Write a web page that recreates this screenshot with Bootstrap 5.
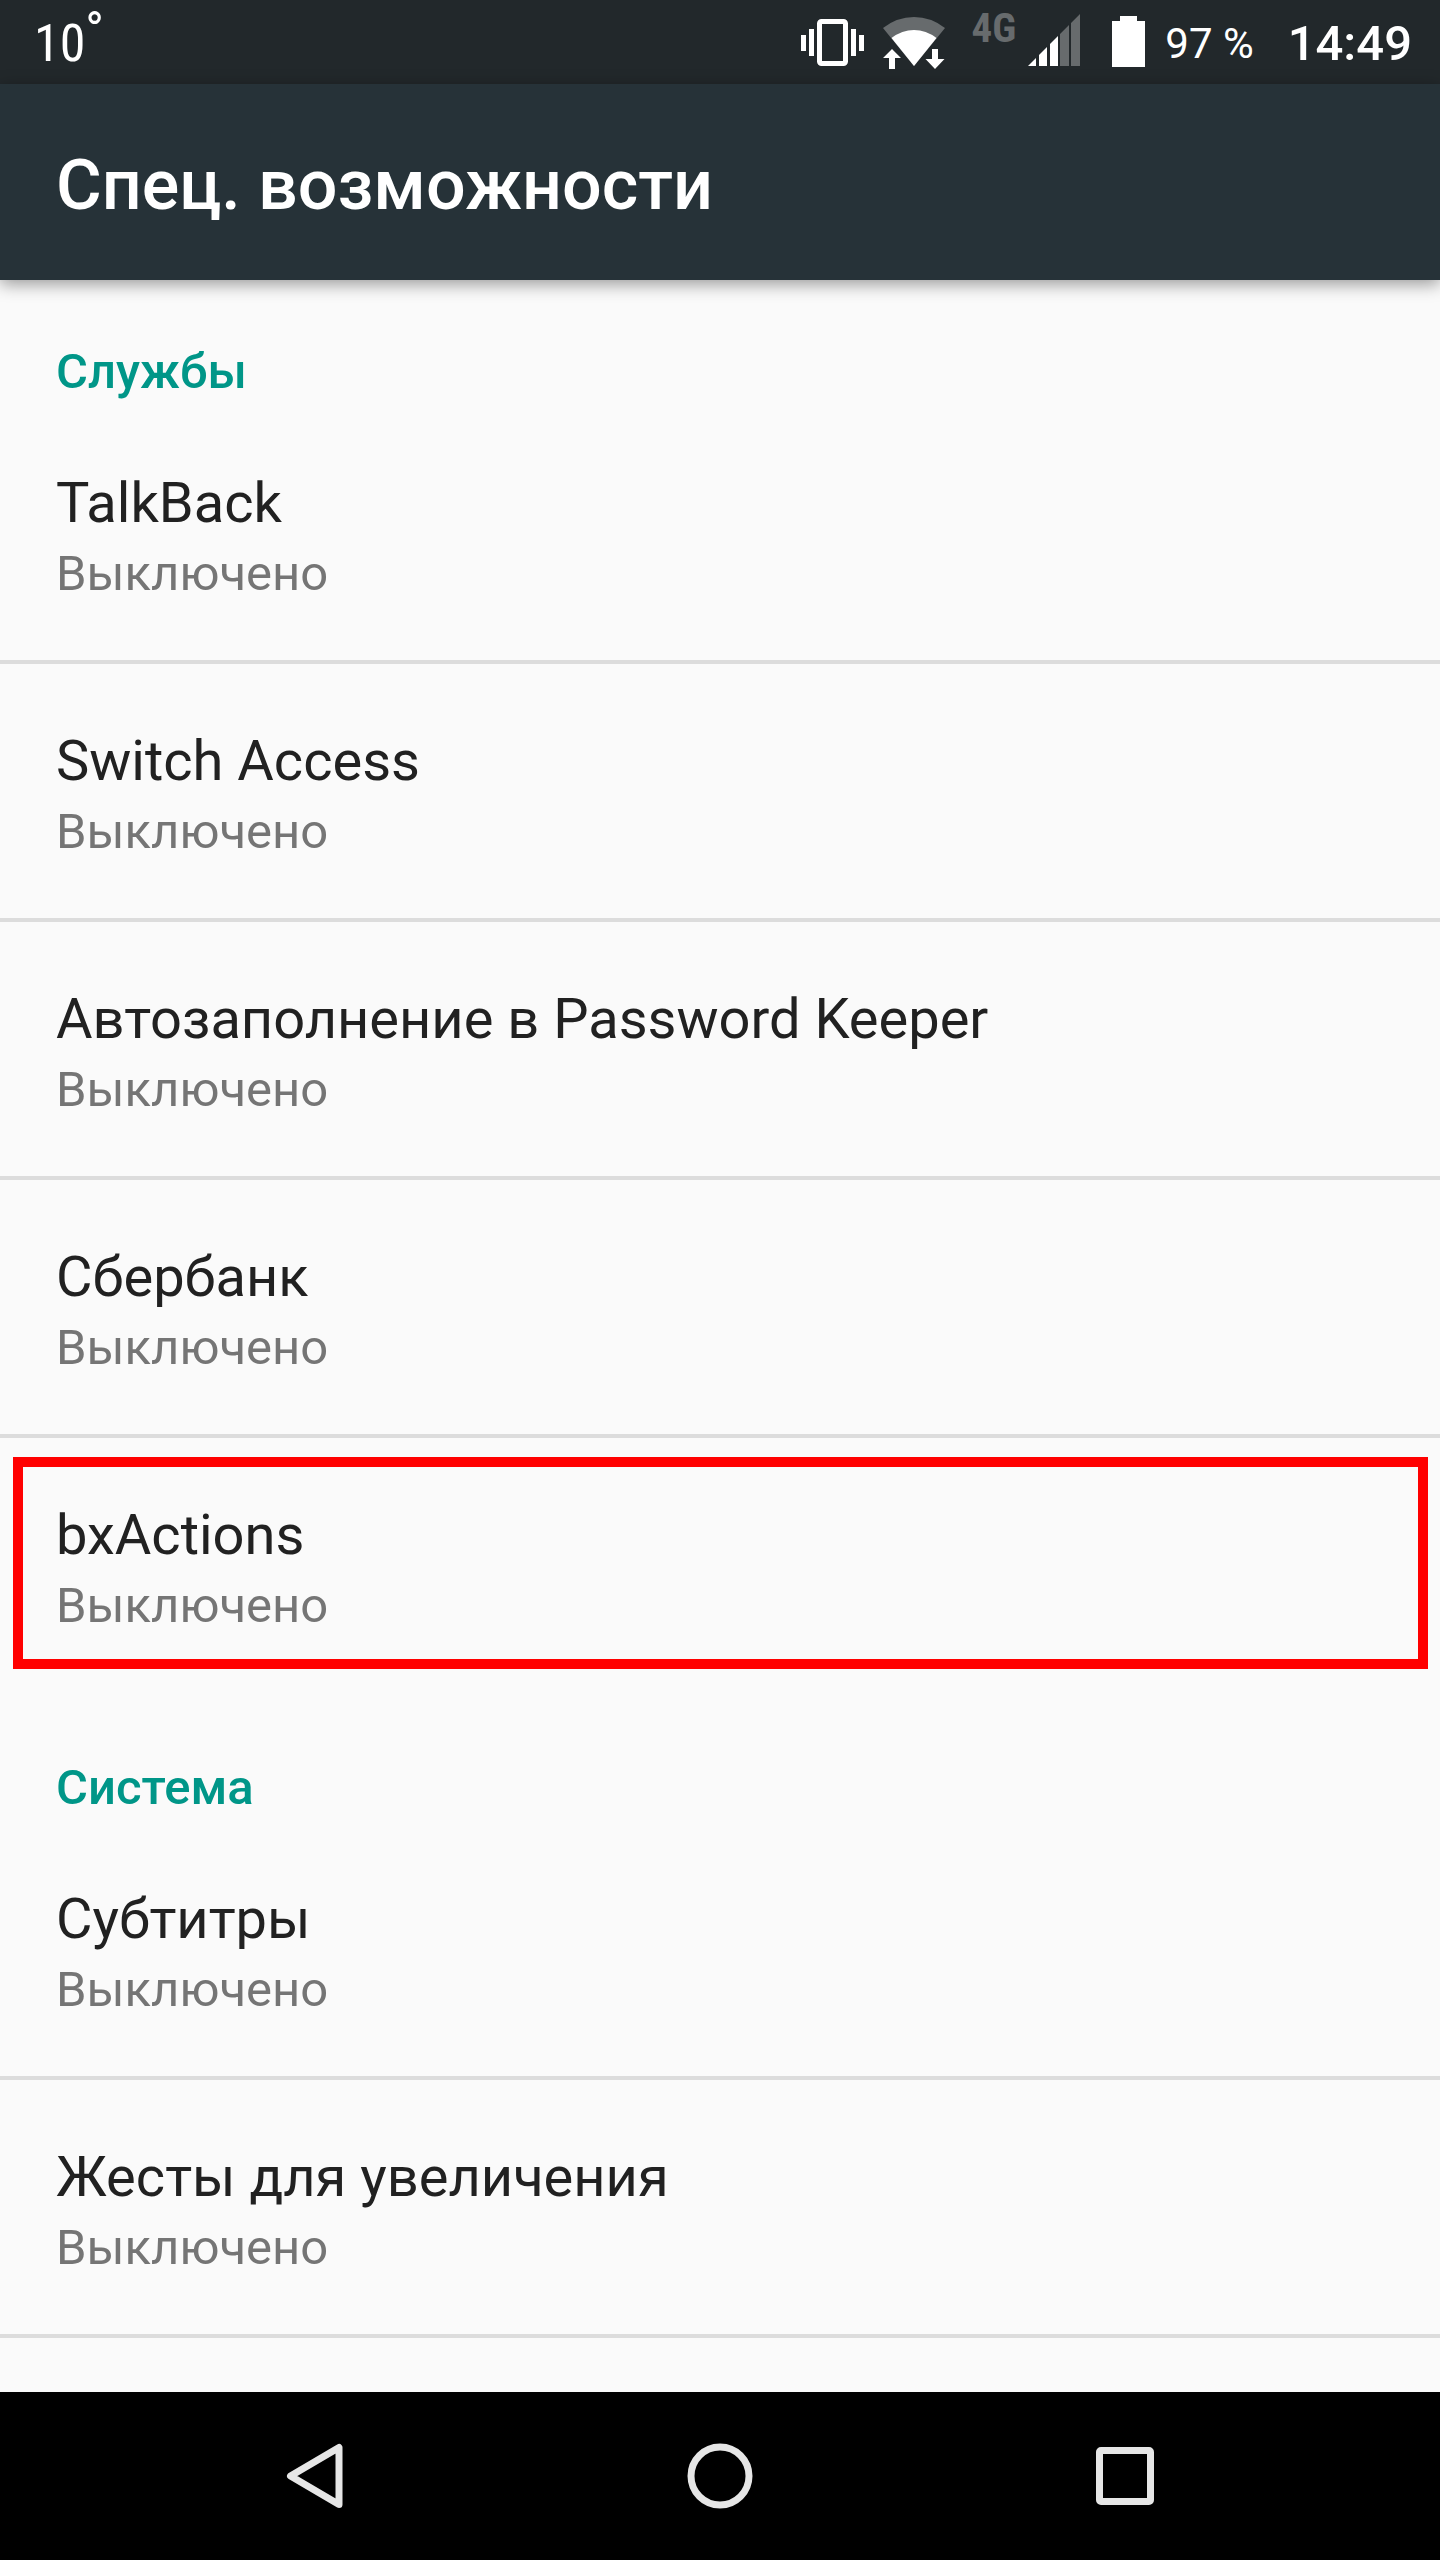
<!DOCTYPE html>
<html lang="ru">
<head>
<meta charset="utf-8">
<meta name="viewport" content="width=device-width, initial-scale=1">
<title>Спец. возможности</title>
<link href="https://cdn.jsdelivr.net/npm/bootstrap@5.3.0/dist/css/bootstrap.min.css" rel="stylesheet">
<style>
  body { font-family: Roboto, "Noto Sans", sans-serif; background: #fafafa; color: #212121; }
  svg { display: block; flex: none; }
  .status-bar { height: 84px; background: #22282b; color: #fff; line-height: 88px; padding: 0 28px 0 34px; white-space: nowrap; }
  .temperature { font-family: "Roboto Condensed", "Liberation Sans Narrow", Roboto, sans-serif; font-size: 52px; }
  .degree { font-size: 50px; line-height: 62px; }
  .network-type { font-family: "Roboto Condensed", "Liberation Sans Narrow", Roboto, sans-serif; font-size: 41px; font-weight: 700; line-height: 56px; color: #676b6d; margin: 0 12px 0 24px; }
  .charge { font-size: 42px; margin: 0 34px 0 20px; }
  .clock { font-size: 49px; font-weight: 500; }
  .icon-wifi { margin: 0 1px 0 17px; }
  .icon-battery { margin-left: 31px; }
  .app-bar { background: #263238; color: #fff; padding: 60px 56px 54px; box-shadow: 0 4px 16px rgba(0, 0, 0, .4); }
  .app-bar h1 { font-size: 70px; line-height: 82px; font-weight: 500; }
  .group-title { font-size: 49px; line-height: 60px; font-weight: 500; color: #009688; padding: 62px 56px 4px; }
  .settings .list-group-item { background: transparent; color: #212121; border: 0 solid #dcdcdc; border-bottom-width: 4px; padding: 64px 56px 56px; }
  .settings.list-group-flush > .list-group-item:last-child { border-bottom-width: 4px; }
  .settings.closed > .list-group-item:last-child { border-bottom-color: transparent; }
  .item-name { font-size: 56px; line-height: 66px; }
  .item-state { font-size: 49px; line-height: 60px; color: #757575; }
  .highlight { inset: 19px 12px 23px 13px; border: 10px solid #f00; pointer-events: none; }
  .nav-keys { background: #000; padding: 0 112px; }
  .nav-keys .btn { flex: 1 1 0; height: 168px; border: 0; border-radius: 0; }
</style>
<script src="https://cdn.jsdelivr.net/npm/bootstrap@5.3.0/dist/js/bootstrap.bundle.min.js"></script>
</head>
<body class="min-vh-100 d-flex flex-column">
<div class="status-bar d-flex align-items-start">
  <span class="temperature">10</span><span class="degree me-auto">°</span>
  <svg width="63" height="84" viewBox="801 0 63 84" role="img" aria-label="Вибрация" fill="#fff">
    <rect x="819.500" y="21.500" width="26" height="42" rx="2" fill="none" stroke="#fff" stroke-width="5"/>
    <path d="M801 35h5v16h-5zM809 29h5v27h-5zM851 29h5v27h-5zM859 35h5v16h-5z"/>
  </svg>
  <svg class="icon-wifi" width="66" height="84" viewBox="882 0 66 84" role="img" aria-label="Wi-Fi" fill="#fff">
    <path fill="#676b6d" d="M884 28Q898 17 915 17T946 28L915 66z"/>
    <path d="M892.500 38Q903 30 915 30T937.500 38L915 66z"/>
    <path d="M893 49l9 9h-6v11h-6V58h-6zM933 49h6v10h6.500l-9.500 10-9.500-10h6.500z"/>
  </svg>
  <span class="network-type">4G</span>
  <svg width="53" height="84" viewBox="1028 0 53 84" role="img" aria-label="Сигнал">
    <path fill="#fff" d="M1028 66l8-8v8zM1039 66V55l8-8v19zM1050 66V44l8-8v30z"/>
    <path fill="#676b6d" d="M1060 66V34l9-9v41zM1071 66V23l9-9v52z"/>
  </svg>
  <svg class="icon-battery" width="33" height="84" viewBox="1112 0 33 84" role="img" aria-label="Батарея">
    <path fill="#fff" d="M1120 16h17v5h8v46h-33V21h8z"/>
  </svg>
  <span class="charge">97 %</span>
  <time class="clock">14:49</time>
</div>
<header class="app-bar"><h1 class="m-0">Спец. возможности</h1></header>
<main class="flex-fill">
  <section>
    <h2 class="group-title m-0">Службы</h2>
    <div class="settings closed list-group list-group-flush">
      <a href="#" class="list-group-item list-group-item-action"><div class="item-name mb-2">TalkBack</div><div class="item-state">Выключено</div></a>
      <a href="#" class="list-group-item list-group-item-action"><div class="item-name mb-2">Switch Access</div><div class="item-state">Выключено</div></a>
      <a href="#" class="list-group-item list-group-item-action"><div class="item-name mb-2">Автозаполнение в Password Keeper</div><div class="item-state">Выключено</div></a>
      <a href="#" class="list-group-item list-group-item-action"><div class="item-name mb-2">Сбербанк</div><div class="item-state">Выключено</div></a>
      <a href="#" class="list-group-item list-group-item-action"><div class="item-name mb-2">bxActions</div><div class="item-state">Выключено</div><span class="highlight position-absolute"></span></a>
    </div>
  </section>
  <section>
    <h2 class="group-title m-0">Система</h2>
    <div class="settings list-group list-group-flush">
      <a href="#" class="list-group-item list-group-item-action"><div class="item-name mb-2">Субтитры</div><div class="item-state">Выключено</div></a>
      <a href="#" class="list-group-item list-group-item-action"><div class="item-name mb-2">Жесты для увеличения</div><div class="item-state">Выключено</div></a>
    </div>
  </section>
</main>
<nav class="nav-keys d-flex">
  <button type="button" class="btn d-flex align-items-center justify-content-center p-0" aria-label="Назад">
    <svg width="58" height="66" viewBox="0 0 58 66" fill="none" stroke="#e6e6e6" stroke-width="7" stroke-linejoin="round"><path d="M4.500 33L53 4.500V61.500z"/></svg>
  </button>
  <button type="button" class="btn d-flex align-items-center justify-content-center p-0" aria-label="Домой">
    <svg width="66" height="66" viewBox="0 0 66 66" fill="none" stroke="#e6e6e6" stroke-width="7"><circle cx="33" cy="33" r="29"/></svg>
  </button>
  <button type="button" class="btn d-flex align-items-center justify-content-center p-0" aria-label="Обзор">
    <svg width="60" height="60" viewBox="0 0 60 60"><path fill="#e6e6e6" fill-rule="evenodd" d="M6 1h48a5 5 0 0 1 5 5v48a5 5 0 0 1-5 5H6a5 5 0 0 1-5-5V6a5 5 0 0 1 5-5zM8 8v44h44V8z"/></svg>
  </button>
</nav>
</body>
</html>
